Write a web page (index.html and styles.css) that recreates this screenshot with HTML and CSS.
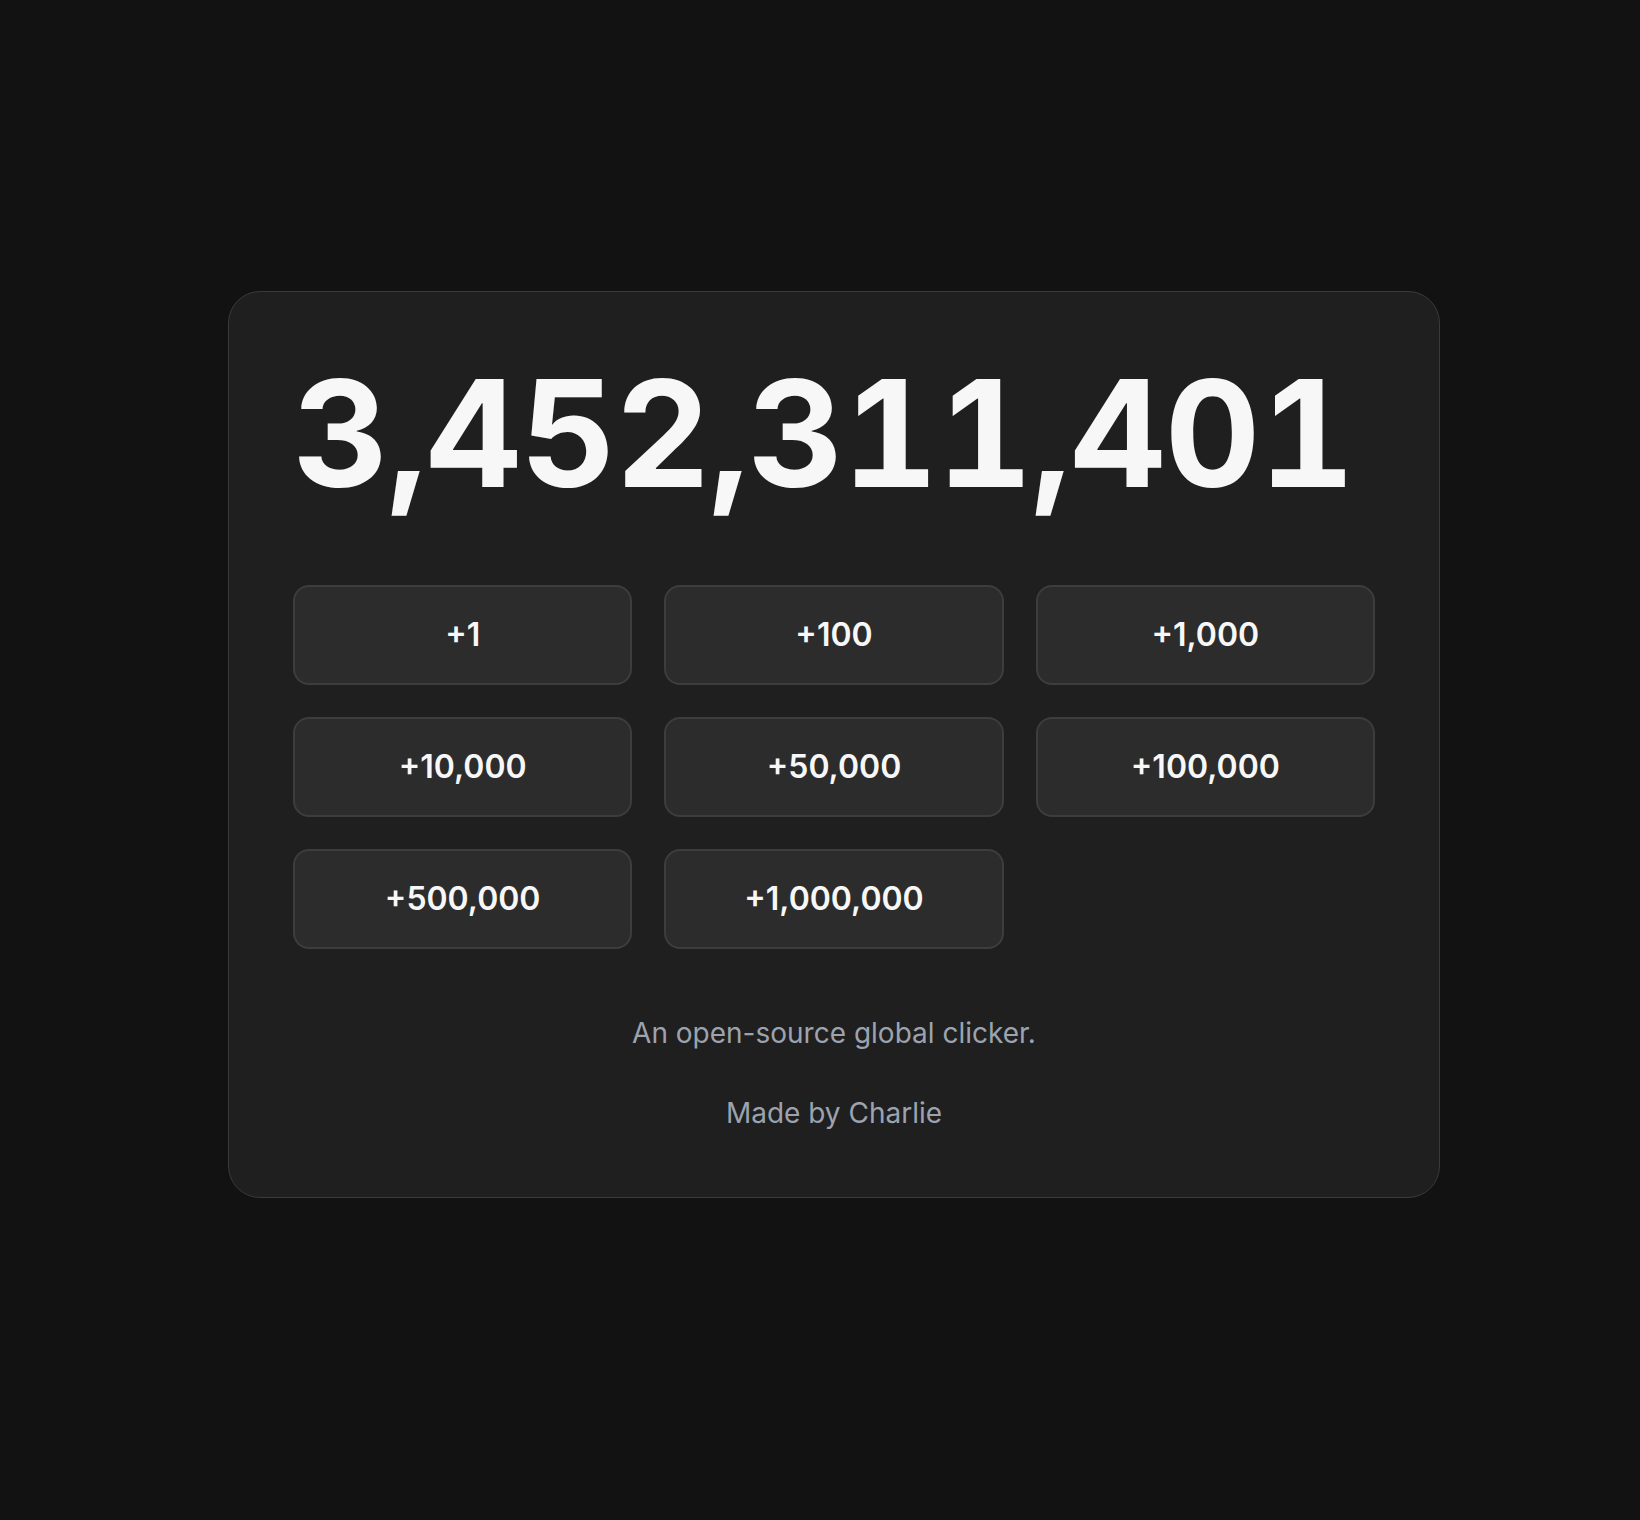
FILE: index.html
```html
<!DOCTYPE html>
<html lang="en">
<head>
<meta charset="utf-8">
<title>Global Clicker</title>
<link rel="stylesheet" href="styles.css">
</head>
<body>
<main class="page">
  <section class="card">
    <h1 class="count">3,452,311,401</h1>
    <div class="grid">
      <button class="btn">+1</button>
      <button class="btn">+100</button>
      <button class="btn">+1,000</button>
      <button class="btn">+10,000</button>
      <button class="btn">+50,000</button>
      <button class="btn">+100,000</button>
      <button class="btn">+500,000</button>
      <button class="btn">+1,000,000</button>
    </div>
    <p class="note">An open-source global clicker.</p>
    <p class="note">Made by Charlie</p>
  </section>
</main>
</body>
</html>
```
FILE: styles.css
```css
html, body {
  margin: 0;
  padding: 0;
  background: #121212;
}
body {
  font-family: Inter, "Noto Sans", sans-serif;
  color: #f7f7f7;
}
.page {
  min-height: 1520px;
  display: flex;
  align-items: center;
  justify-content: center;
  padding-left: 28px;
  box-sizing: border-box;
}
.card {
  width: 1082px;
  padding: 64px;
  background: #1f1f1f;
  border: 1px solid #3a3a3a;
  border-radius: 32px;
  margin-top: -32px;
}
.count {
  margin: 0;
  font-family: Inter, sans-serif;
  font-size: 148px;
  line-height: 1;
  font-weight: 700;
  text-align: left;
  font-variant-numeric: tabular-nums;
  letter-spacing: -0.008em;
  color: #f7f7f7;
  padding-top: 4px;
  white-space: nowrap;
}
.grid {
  display: grid;
  grid-template-columns: repeat(3, 1fr);
  gap: 32px;
  margin-top: 77px;
}
.btn {
  height: 100px;
  background: #2c2c2c;
  border: 2px solid #3d3d3d;
  border-radius: 16px;
  color: #f7f7f7;
  font-family: Inter, "Noto Sans", sans-serif;
  font-size: 32px;
  font-weight: 600;
  padding: 0;
}
.note {
  margin: 0;
  text-align: center;
  color: #9ca3af;
  font-size: 28px;
  line-height: 40px;
}
.grid + .note {
  margin-top: 64px;
}
.note + .note {
  margin-top: 40px;
}
```
